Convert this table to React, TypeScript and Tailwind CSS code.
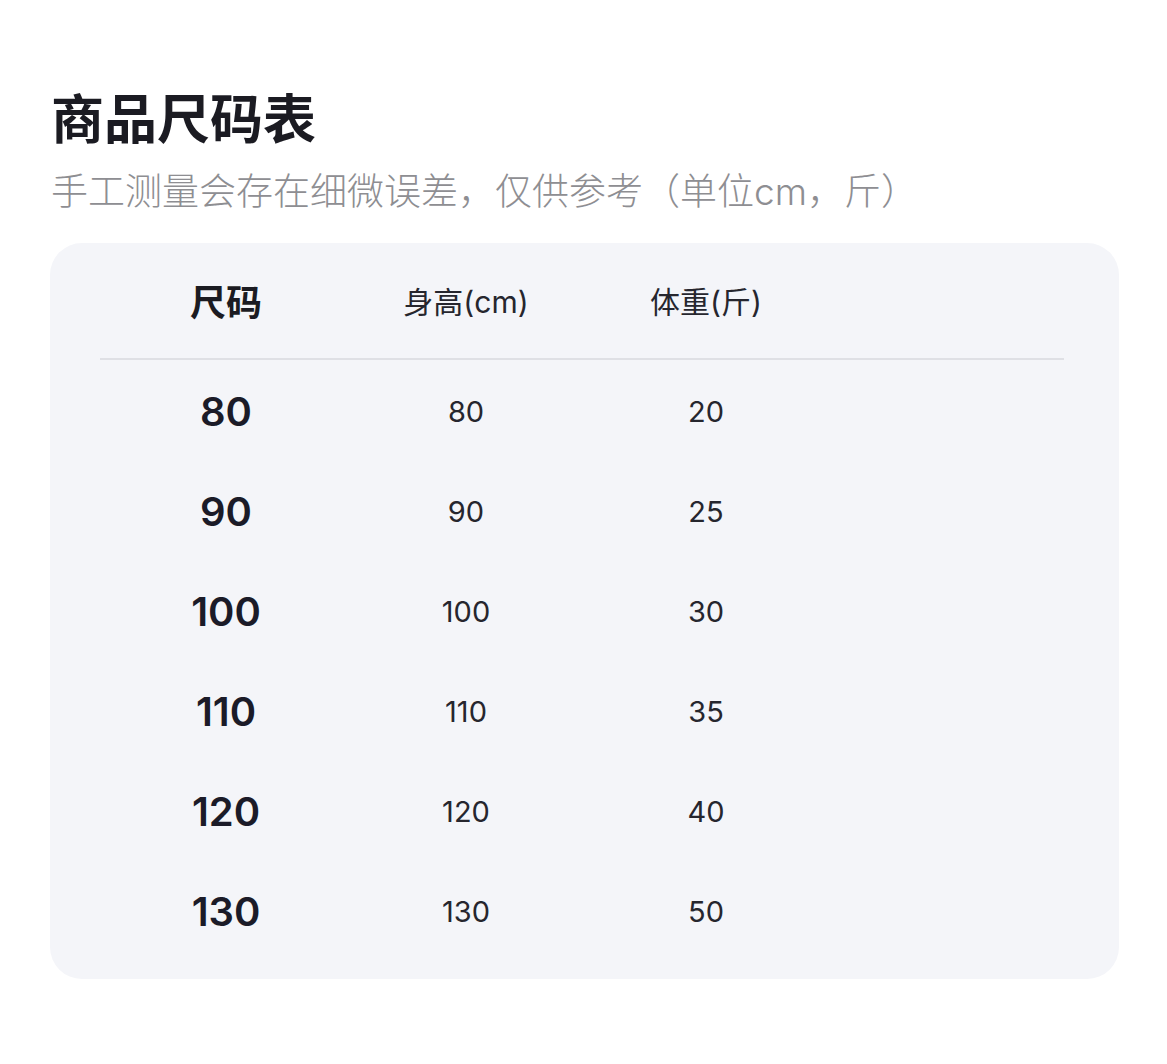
const rows = [
  { size: "80", height: "80", weight: "20" },
  { size: "90", height: "90", weight: "25" },
  { size: "100", height: "100", weight: "30" },
  { size: "110", height: "110", weight: "35" },
  { size: "120", height: "120", weight: "40" },
  { size: "130", height: "130", weight: "50" },
];

export default function App() {
  return (
    <div
      className="min-h-screen w-full bg-white pt-[90px] px-[50px]"
      style={{ fontFamily: '"Inter", "Noto Sans CJK SC", sans-serif' }}
    >
      <h1 className="text-[53px] leading-[60px] font-bold text-[#1b1b22] pl-[1px]">
        商品尺码表
      </h1>
      <p className="mt-[20px] text-[37px] leading-[44px] font-light text-[#8e8e92] pl-[1px]">
        手工测量会存在细微误差，仅供参考（单位cm，斤）
      </p>

      <div className="mt-[29px] w-[1069px] rounded-[32px] bg-[#f4f5f9] pl-[50px] pr-[55px] pb-[17px]">
        <div className="grid grid-cols-[240px_240px_240px_1fr] h-[117px] items-center border-b-2 border-[#dfe0e5] pl-[6px] pt-[4px]">
          <div className="text-center text-[36px] font-bold text-[#1b1b22]">尺码</div>
          <div className="text-center text-[30px] text-[#26262e]">身高(cm)</div>
          <div className="text-center text-[30px] text-[#26262e]">体重(斤)</div>
          <div />
        </div>
        <div className="pt-[2px]">
          {rows.map((r) => (
            <div
              key={r.size}
              className="grid grid-cols-[240px_240px_240px_1fr] h-[100px] items-center pl-[6px]"
            >
              <div className="text-center text-[40px] font-semibold text-[#1b1b28]">
                {r.size}
              </div>
              <div className="text-center text-[29px] text-[#26262e]">{r.height}</div>
              <div className="text-center text-[29px] text-[#26262e]">{r.weight}</div>
              <div />
            </div>
          ))}
        </div>
      </div>
    </div>
  );
}
